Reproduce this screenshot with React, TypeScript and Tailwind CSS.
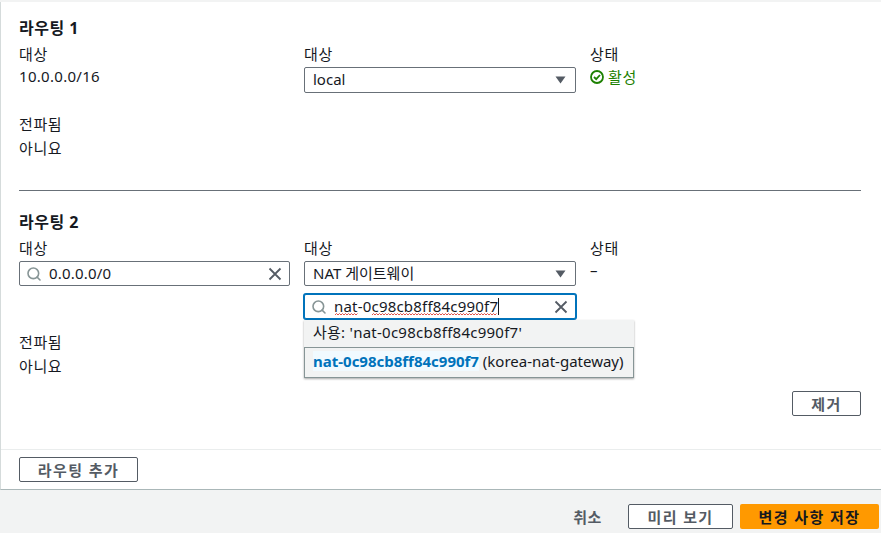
import { Search } from 'lucide-react';

const ko = 'tracking-[0.6px]';

function Caret() {
  return (
    <svg width="11" height="8" viewBox="0 0 11 8" className="absolute right-[9px] top-[8px]">
      <path d="M0.5 0.5h10L5.5 7.5z" fill="#545b64" />
    </svg>
  );
}

function Clear() {
  return (
    <svg width="14" height="14" viewBox="0 0 14 14" className="shrink-0" fill="none" stroke="#545b64" strokeWidth="1.8">
      <path d="M1.5 1.5l11 11M12.5 1.5l-11 11" />
    </svg>
  );
}

function Select({ value, height }: { value: string; height: string }) {
  return (
    <div className={'relative border border-[#687078] rounded-[2px] bg-white pl-2 pb-[2px] flex items-center text-[#16191f] ' + height}>
      {value}
      <Caret />
    </div>
  );
}

function SearchInput({ value, active }: { value: string; active?: boolean }) {
  return (
    <div
      className={
        active
          ? 'flex items-center h-[25px] border border-[#0073bb] rounded-[2px] bg-white pl-[6px] pr-[7px] shadow-[0_0_0_1px_#0073bb] text-[#16191f]'
          : 'flex items-center h-[25px] border border-[#687078] rounded-[2px] bg-white pl-[6px] pr-[7px] text-[#16191f]'
      }
    >
      <Search size={16} strokeWidth={2.4} className="text-[#879596] shrink-0" />
      <span className="ml-[7px] flex-1 pb-[2px] tracking-[0.2px]">
        {value}
        {active && <span className="inline-block w-px h-[17px] bg-[#16191f] align-[-3px]" />}
      </span>
      <Clear />
    </div>
  );
}

function zigzag(from: number, to: number) {
  let d = `M${from} 2`;
  for (let x = from + 1.5, up = true; x <= to; x += 1.5, up = !up) {
    d += `L${x} ${up ? 0.5 : 2}`;
  }
  return d;
}

function Squiggle() {
  return (
    <svg width="166" height="3" viewBox="0 0 166 3" className="absolute left-[31px] top-[19px]">
      <path d={zigzag(0, 23) + zigzag(37, 162)} fill="none" stroke="#e0524a" strokeWidth="1" />
    </svg>
  );
}

function Btn({ label, className }: { label: string; className: string }) {
  return (
    <button
      className={
        'h-[25px] border border-[#545b64] rounded-[2px] bg-white text-[#545b64] font-bold tracking-[1.4px] text-center ' +
        className
      }
    >
      {label}
    </button>
  );
}

export default function App() {
  return (
    <div className="w-[881px] h-[533px] overflow-hidden bg-[#f2f3f3] pt-[2px] text-[15px] leading-[20px] text-[#16191f] font-['Noto_Sans','Noto_Sans_CJK_KR',sans-serif]">
      <div className="h-[488px] bg-white border-l border-[#d5dbdb] border-b border-b-[#aab7b8] flex flex-col">
        <div className="h-[189px] ml-[18px] pt-[16px] border-b border-[#687078] w-[842px] shrink-0">
          <h3 className="font-bold text-[16px] leading-[20px] tracking-[0.5px]">라우팅 1</h3>
          <div className="grid grid-cols-[271px_272px_1fr] gap-x-[14px] mt-[5px]">
            <div>
              <div className={'leading-[22px] ' + ko}>대상</div>
              <div className="mt-px tracking-[0.3px]">10.0.0.0/16</div>
            </div>
            <div>
              <div className={'leading-[22px] mb-[2px] ' + ko}>대상</div>
              <Select value="local" height="h-[26px]" />
            </div>
            <div>
              <div className={'leading-[22px] ' + ko}>상태</div>
              <div className="mt-[2px] flex items-center text-[#1d8102]">
                <svg width="14" height="14" viewBox="0 0 14 14" fill="none" stroke="#1d8102" strokeWidth="1.8" className="mr-[4px]">
                  <circle cx="7" cy="7" r="6" />
                  <path d="M4 7l2.2 2.2L10 5" />
                </svg>
                <span className="tracking-[0.8px]">활성</span>
              </div>
            </div>
          </div>
          <div className={'mt-[20px] leading-[22px] ' + ko}>전파됨</div>
          <div className={'mt-[3px] ' + ko}>아니요</div>
        </div>

        <div className="flex-1 pl-[18px] pt-[21px]">
          <h3 className="font-bold text-[16px] leading-[20px] tracking-[0.5px]">라우팅 2</h3>
          <div className="grid grid-cols-[271px_272px_1fr] gap-x-[14px] mt-[5px] w-[842px]">
            <div>
              <div className={'leading-[22px] mb-[2px] ' + ko}>대상</div>
              <SearchInput value="0.0.0.0/0" />
            </div>
            <div className="relative">
              <div className={'leading-[22px] mb-[2px] ' + ko}>대상</div>
              <Select value="NAT 게이트웨이" height="h-[25px]" />
              <div className="relative mt-[8px]">
                <SearchInput value="nat-0c98cb8ff84c990f7" active />
                <Squiggle />
              </div>
              <div className="absolute left-0 top-[83px] w-[330px] bg-[#f2f3f3] shadow-[0_1px_2px_rgba(0,0,0,0.35)] z-10">
                <div className="h-[27px] pl-[9px] leading-[25px] tracking-[0.25px]">사용: 'nat-0c98cb8ff84c990f7'</div>
                <div className="h-[31px] border border-[#879596] pl-2 leading-[26px] whitespace-nowrap">
                  <span className="font-bold text-[#0073bb] bg-[#f1faff]">nat-0c98cb8ff84c990f7</span> (korea-nat-gateway)
                </div>
              </div>
            </div>
            <div>
              <div className={'leading-[22px] ' + ko}>상태</div>
              <div className="mt-px">–</div>
            </div>
          </div>
          <div className={'mt-[12px] leading-[22px] ' + ko}>전파됨</div>
          <div className={'mt-[3px] ' + ko}>아니요</div>
          <div className="flex justify-end w-[842px] mt-[15px]">
            <Btn label="제거" className="w-[69px]" />
          </div>
        </div>

        <div className="h-[40px] border-t border-[#eaeded] pl-[18px] pt-[7px] shrink-0">
          <Btn label="라우팅 추가" className="w-[119px]" />
        </div>
      </div>

      <div className="flex justify-end items-center h-[25px] mt-[14px] pr-[2px]">
        <span className="text-[#545b64] font-bold tracking-[0.6px] mr-[26px]">취소</span>
        <Btn label="미리 보기" className="w-[105px] mr-[7px]" />
        <button className="w-[139px] h-[25px] rounded-[2px] bg-[#ff9900] text-[#16191f] font-bold tracking-[1.4px] text-center">
          변경 사항 저장
        </button>
      </div>
    </div>
  );
}
